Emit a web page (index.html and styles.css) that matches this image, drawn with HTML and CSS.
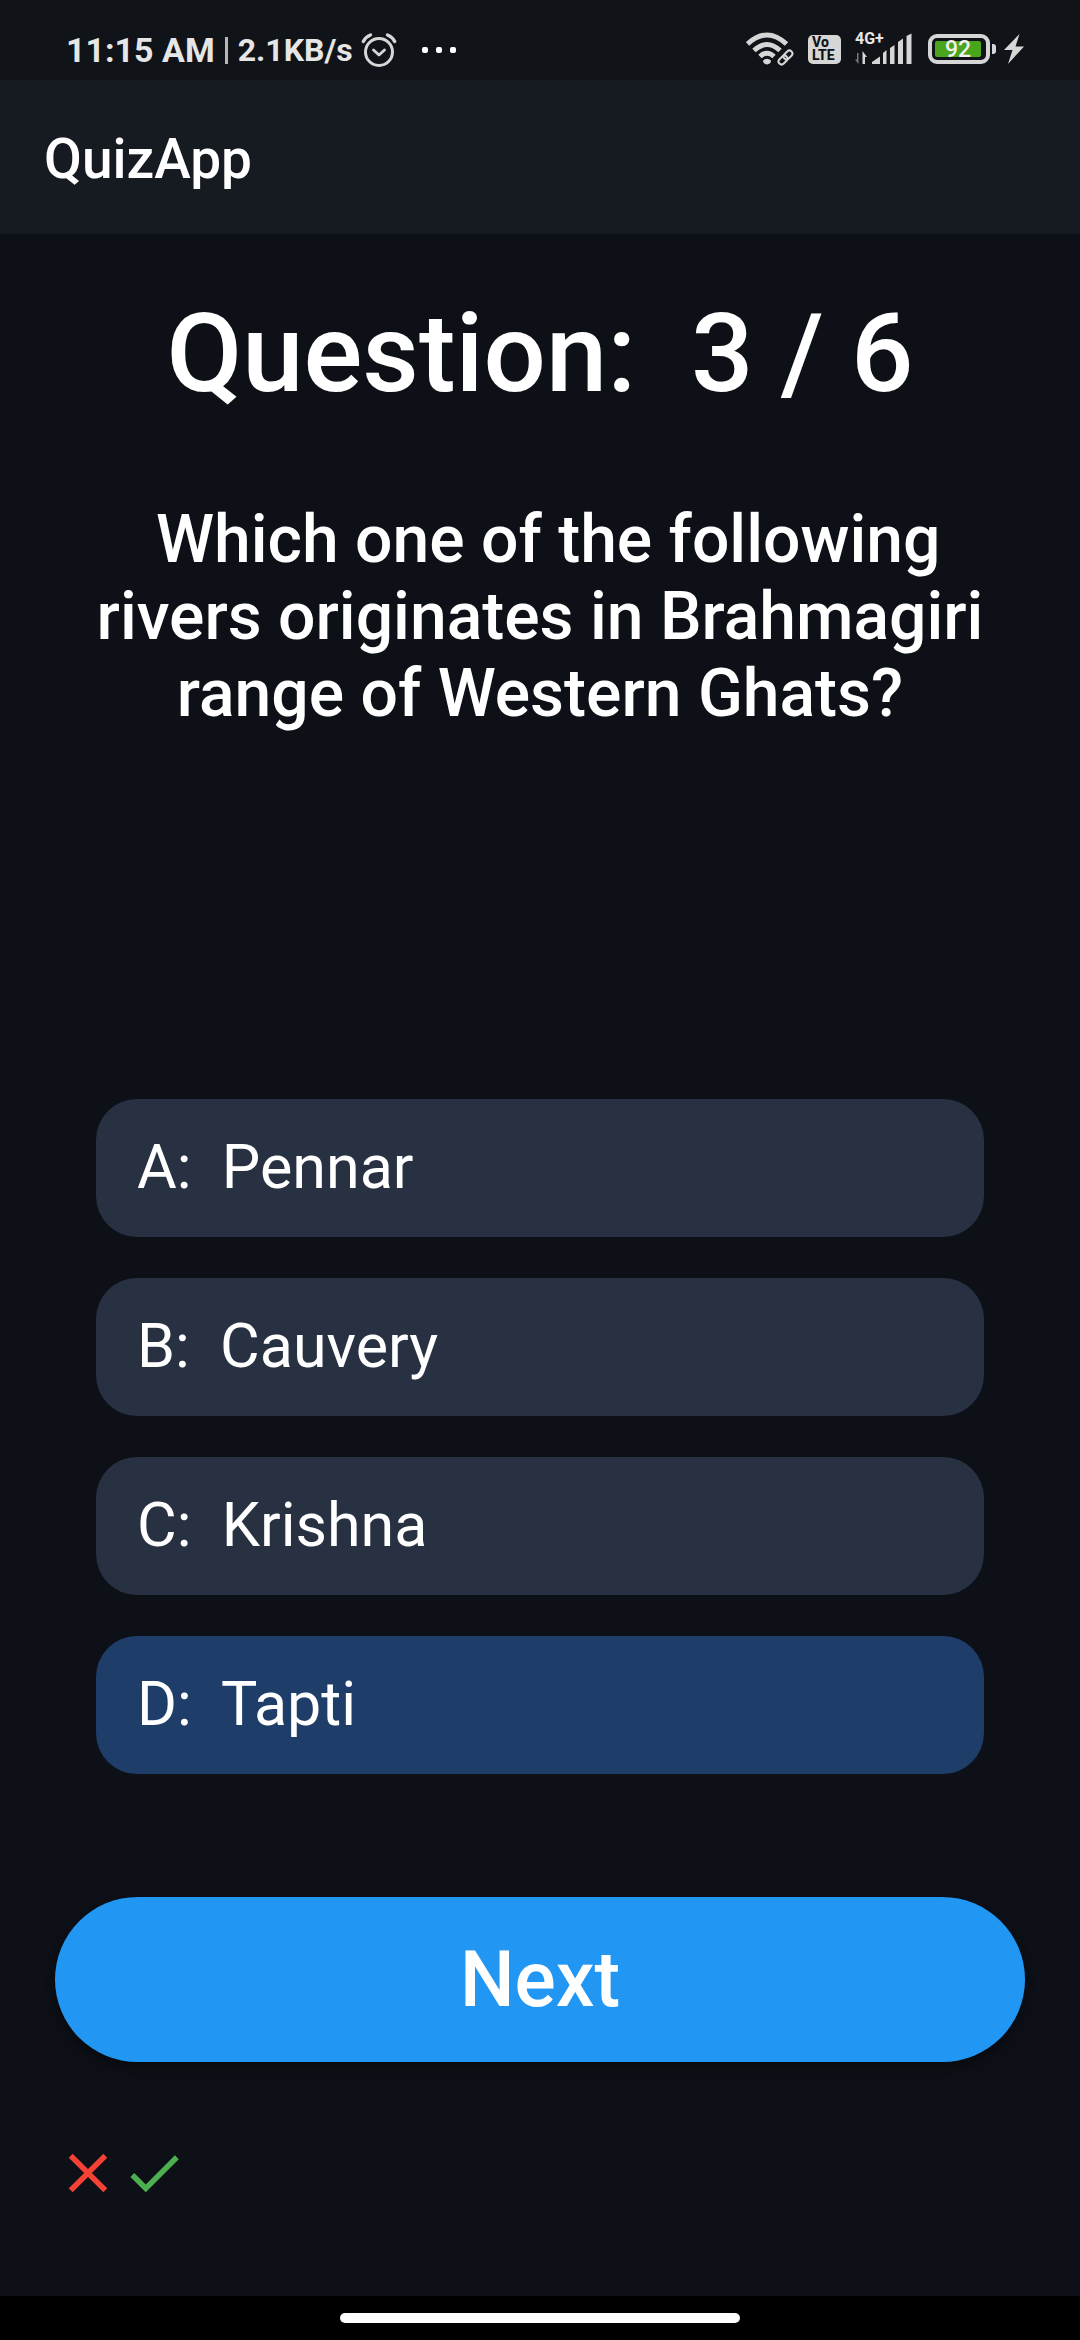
FILE: index.html
```html
<!DOCTYPE html>
<html lang="en">
<head>
<meta charset="utf-8">
<meta name="viewport" content="width=device-width, initial-scale=1">
<title>QuizApp</title>
<link rel="stylesheet" href="styles.css">
</head>
<body>
<div class="status-bar">
  <div class="status-left">
    <span class="status-time">11:15 AM</span>
    <span class="status-divider"></span>
    <span class="status-speed">2.1KB/s</span>
    <svg class="icon-alarm" width="36" height="36" viewBox="0 0 36 36" fill="none" stroke="#d6d6d6" stroke-width="3" stroke-linecap="round" stroke-linejoin="round" aria-hidden="true">
      <circle cx="18" cy="20" r="13.500"/>
      <path d="M12.500 18l5.500 5 5.500-5" stroke-width="2.800"/>
      <path d="M2.300 9.500Q4.500 5 9.500 3M33.700 9.500Q31.500 5 26.500 3" stroke-width="3.400"/>
    </svg>
    <svg class="icon-more" width="36" height="8" viewBox="0 0 36 8" fill="#fff" aria-hidden="true">
      <rect x="0" y="1" width="6" height="6" rx="2"/><rect x="14" y="1" width="6" height="6" rx="2"/><rect x="28" y="1" width="6" height="6" rx="2"/>
    </svg>
  </div>
  <div class="status-right">
    <svg width="48" height="34" viewBox="0 0 48 34" fill="none" stroke="#d6d6d6" aria-hidden="true">
      <path d="M1.500 12Q21 -6 40.500 12" stroke-width="5"/>
      <path d="M8 18.500Q21 6.500 34 18.500" stroke-width="5"/>
      <path d="M14 24.500Q21 18 28 24.500" stroke-width="5"/>
      <path d="M17 28.500Q21 25 25 28.500Q25 32 21 32.500Q17 32 17 28.500Z" fill="#d6d6d6" stroke="none"/>
      <g transform="rotate(-45 39.500 25.500)" stroke-width="2">
        <rect x="31" y="22.500" width="10" height="6" rx="3"/>
        <rect x="38" y="22.500" width="10" height="6" rx="3"/>
      </g>
    </svg>
    <span class="volte"><span>Vo</span><span>LTE</span></span>
    <div class="signal">
      <span class="signal-type">4G+</span>
      <svg width="57" height="32" viewBox="0 0 57 32" fill="#d6d6d6" aria-hidden="true">
        <path d="M3.500 20v11L0 26.500h2V20z" fill="#77797b"/>
        <path d="M7.500 31V18l4.500 6H10v7z"/>
        <path d="M17 31v-2l8-5.500V31zM28 31V20l3.500-3V31zM35 31V15l4.500-3V31zM43 31V9l5-3.500V31zM51.500 31V3l5-2.500V31z"/>
      </svg>
    </div>
    <span class="battery"><span class="battery-level">92</span></span>
    <svg width="20" height="30" viewBox="0 0 20 30" fill="#d6d6d6" aria-hidden="true">
      <path d="M15.500 0L0 16h8.500L4 30 20 12.500h-8.500z"/>
    </svg>
  </div>
</div>

<header class="app-bar">QuizApp</header>

<main class="quiz">
  <section class="prompt">
    <h1 class="counter">Question:&nbsp; 3 / 6</h1>
    <p class="question">&nbsp;Which one of the following rivers originates in Brahmagiri range of Western Ghats?</p>
  </section>
  <div class="options">
    <button class="option" type="button">A:&nbsp; Pennar</button>
    <button class="option" type="button">B:&nbsp; Cauvery</button>
    <button class="option" type="button">C:&nbsp; Krishna</button>
    <button class="option option-selected" type="button" aria-pressed="true">D:&nbsp; Tapti</button>
  </div>
  <button class="next" type="button">Next</button>
  <div class="results">
    <svg width="66" height="66" viewBox="0 0 24 24" fill="#f44336" role="img" aria-label="Wrong"><path d="M19 6.410L17.590 5 12 10.590 6.410 5 5 6.410 10.590 12 5 17.590 6.410 19 12 13.410 17.590 19 19 17.590 13.410 12z"/></svg>
    <svg width="66" height="66" viewBox="0 0 24 24" fill="#4caf50" role="img" aria-label="Correct"><path d="M9 16.170L4.830 12l-1.420 1.410L9 19 21 7l-1.410-1.410z"/></svg>
  </div>
</main>

<footer class="nav-bar"><span class="nav-pill"></span></footer>
</body>
</html>
```
FILE: styles.css
```css
* {
  box-sizing: border-box;
}

body {
  margin: 0;
  min-height: 100vh;
  display: flex;
  flex-direction: column;
  background: #0d1017;
  color: #fff;
  font-family: Roboto, "Noto Sans", sans-serif;
}

button {
  border: 0;
  color: inherit;
  font-family: inherit;
  cursor: pointer;
}

svg {
  display: block;
  flex: none;
}

/* System status bar */
.status-bar {
  display: flex;
  justify-content: space-between;
  height: 80px;
  padding: 18px 56px 0 66px;
  background: #101318;
  color: #e6e6e6;
}

.status-left,
.status-right {
  display: flex;
  align-items: center;
  height: 64px;
}

.status-time {
  font-size: 34px;
  font-weight: 700;
}

.status-divider {
  width: 3px;
  height: 27px;
  margin: 0 10px;
  background: #b8b8b8;
}

.status-speed {
  font-size: 32px;
  font-weight: 700;
}

.icon-alarm {
  margin-left: 8px;
}

.icon-more {
  margin-left: 25px;
}

.status-right {
  height: 62px;
  gap: 14px;
}

.volte {
  display: flex;
  flex-direction: column;
  width: 33px;
  height: 29px;
  padding: 1px 4px;
  border-radius: 5px;
  background: #d6d6d6;
  color: #101318;
  font-size: 14px;
  font-weight: 800;
  line-height: 13px;
}

.signal {
  position: relative;
}

.signal-type {
  position: absolute;
  top: -2px;
  left: 0;
  font-size: 16px;
  font-weight: 700;
  line-height: 16px;
}

.battery {
  position: relative;
  display: flex;
  width: 62px;
  height: 30px;
  margin-left: 2px;
  padding: 3px;
  border: 4px solid #d6d6d6;
  border-radius: 9px;
}

.battery::after {
  content: "";
  position: absolute;
  top: 6px;
  right: -10px;
  width: 4px;
  height: 10px;
  border-radius: 0 3px 3px 0;
  background: #d6d6d6;
}

.battery-level {
  display: flex;
  align-items: center;
  justify-content: center;
  width: 46px;
  border-radius: 2px;
  background: #49a51b;
  color: #f2f2f2;
  font-size: 23px;
  font-weight: 500;
}

/* App bar */
.app-bar {
  display: flex;
  align-items: center;
  height: 154px;
  padding: 4px 44px 0;
  background: #161b22;
  font-size: 55px;
  font-weight: 500;
}

/* Quiz body */
.quiz {
  flex: 1;
  display: flex;
  flex-direction: column;
  padding: 55px 55px 90px;
}

.prompt {
  flex: 1;
  padding: 0 41px 41px;
  text-align: center;
}

.counter {
  margin: 0 0 82px;
  font-size: 110px;
  font-weight: 500;
  line-height: 130px;
}

.question {
  margin: 0;
  font-size: 66px;
  font-weight: 500;
  line-height: 77px;
}

.options {
  display: flex;
  flex-direction: column;
  gap: 41px;
  padding: 0 41px;
}

.option {
  padding: 32px 41px 34px;
  border-radius: 41px;
  background: #283142;
  font-size: 61px;
  line-height: 72px;
  text-align: left;
}

.option-selected {
  background: #1f3d69;
}

.next {
  margin-top: 123px;
  padding: 38px 37px 36px;
  border-radius: 83px;
  background: #2196f3;
  box-shadow: 0 6px 10px #090b0f;
  font-size: 77px;
  font-weight: 500;
  line-height: 91px;
}

.results {
  display: flex;
  margin-top: 78px;
}

/* Gesture navigation */
.nav-bar {
  display: flex;
  align-items: center;
  justify-content: center;
  height: 44px;
  background: #000;
}

.nav-pill {
  width: 37%;
  height: 10px;
  border-radius: 5px;
  background: #fff;
}
```
